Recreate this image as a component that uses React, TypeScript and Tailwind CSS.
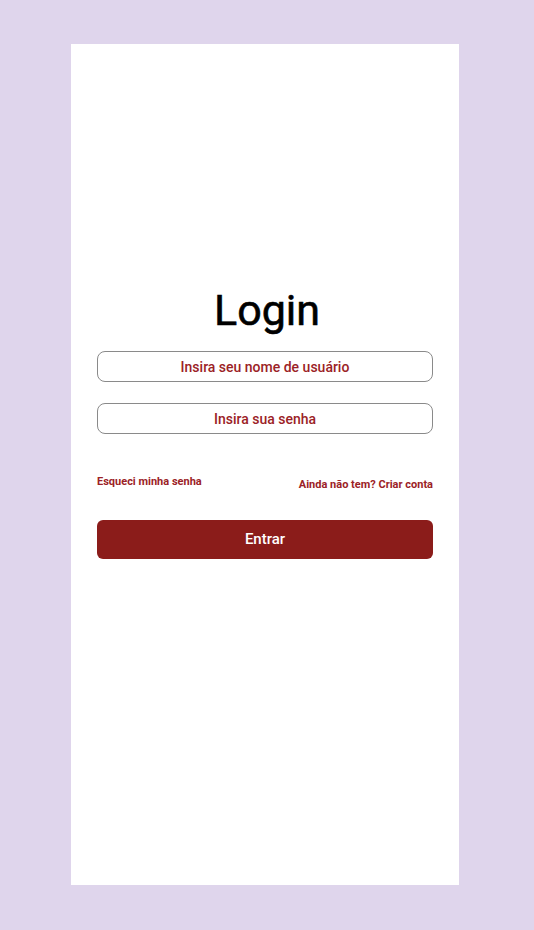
export default function App() {
  return (
    <div
      className="min-h-[930px] w-full bg-[#dfd5ec] pt-[44px] pl-[71px]"
      style={{ fontFamily: "Roboto, 'Noto Sans', sans-serif" }}
    >
      <div className="flex h-[841px] w-[388px] flex-col bg-white px-[26px] pt-[239px]">
        <h1 className="ml-[4px] text-center text-[43px] leading-[54px] font-normal text-black [-webkit-text-stroke:0.6px_black]">
          Login
        </h1>
        <div className="mt-[14px] flex flex-col gap-[21px]">
          <input
            className="h-[31px] w-full rounded-[8px] border border-[#8a8a8a] bg-white text-center text-[14px] font-medium text-[#9b2226] placeholder:text-[#9b2226] outline-none"
            placeholder="Insira seu nome de usuário"
          />
          <input
            type="password"
            className="h-[31px] w-full rounded-[8px] border border-[#8a8a8a] bg-white text-center text-[14px] font-medium text-[#9b2226] placeholder:text-[#9b2226] outline-none"
            placeholder="Insira sua senha"
          />
        </div>
        <div className="mt-[41px] flex items-start justify-between text-[11px] leading-[13px] font-bold text-[#9b2226]">
          <a href="#">Esqueci minha senha</a>
          <a href="#" className="mt-[3px]">
            Ainda não tem? Criar conta
          </a>
        </div>
        <button className="mt-[29px] h-[39px] w-full rounded-[6px] bg-[#8b1c1a] text-[15px] font-medium text-white">
          Entrar
        </button>
      </div>
    </div>
  )
}
